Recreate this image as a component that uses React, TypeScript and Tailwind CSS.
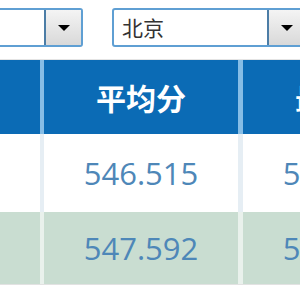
import React from 'react';

const cjk = { fontFamily: '"Microsoft YaHei", "Noto Sans CJK SC", "Noto Sans", sans-serif' };
const num = { fontFamily: '"Open Sans", "Noto Sans", sans-serif' };

interface SelectProps {
    value: string;
    className: string;
}

const Select: React.FC<SelectProps> = ({ value, className }) => (
    <div className={`flex h-[39px] rounded-[3px] border-2 border-[#5f9fd3] bg-white ${className}`}>
        <div className="flex flex-1 items-center pl-[8px] text-[21px] text-[#333]" style={cjk}>
            {value}
        </div>
        <div className="flex w-[37px] items-center justify-center border-l-2 border-[#4c7da6] bg-gradient-to-b from-[#f4f4f4] to-[#d9d9d9]">
            <span className="h-0 w-0 border-x-[6px] border-t-[6px] border-x-transparent border-t-black" />
        </div>
    </div>
);

const rows = [
    { first: '', avg: '546.515', next: '548.221', bg: 'bg-white', sep: 'border-[#e6eef4]' },
    { first: '', avg: '547.592', next: '549.103', bg: 'bg-[#c9ddd1]', sep: 'border-[#e9f1ec]' },
];

export default function App() {
    return (
        <div className="h-[300px] w-[300px] overflow-hidden bg-white">
            <div className="flex h-[60px] items-start gap-[29px] pt-[8px] ml-[-41px] border-b border-[#e4e4e4]">
                <Select value="" className="w-[124px] shrink-0" />
                <Select value="北京" className="w-[194px] shrink-0" />
            </div>

            <div className="flex h-[74px] bg-[#0b6bb5] text-[30px] font-bold text-white ml-[-154px]" style={cjk}>
                <div className="flex w-[198px] shrink-0 items-center justify-center border-r-4 border-[#86bde6]">地区</div>
                <div className="flex w-[199px] shrink-0 items-center justify-center border-r-[5px] border-[#86bde6]">平均分</div>
                <div className="flex w-[194px] shrink-0 items-center justify-center">最高分</div>
            </div>

            {rows.map((row, i) => (
                <div
                    key={i}
                    className={`flex ${i === 0 ? 'h-[78px]' : 'h-[73px] border-b border-[#e2e2e2]'} ${row.bg} ml-[-154px] text-[31px] text-[#4e87b8]`}
                    style={num}
                >
                    <div className={`flex w-[198px] shrink-0 items-center justify-center border-r-4 ${row.sep}`}>{row.first}</div>
                    <div className={`flex w-[199px] shrink-0 items-center justify-center border-r-[5px] ${row.sep}`}>{row.avg}</div>
                    <div className="flex w-[194px] shrink-0 items-center justify-center">{row.next}</div>
                </div>
            ))}
        </div>
    );
}
